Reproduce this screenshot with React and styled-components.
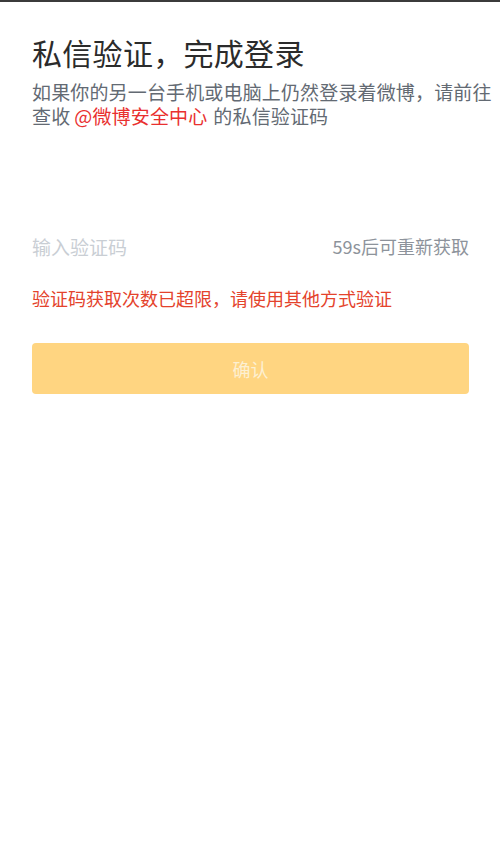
import React from "react";
import styled, { createGlobalStyle } from "styled-components";

const GlobalStyle = createGlobalStyle`
  html, body {
    margin: 0;
    padding: 0;
    background: #ffffff;
  }
  body {
    font-family: "Noto Sans CJK SC", "Noto Sans", sans-serif;
  }
`;

const App = () => {
  return (
    <>
      <GlobalStyle />
      <Page>
        <TopLine />
        <Content>
          <Title>私信验证，完成登录</Title>
          <Desc>
            <DescLine>如果你的另一台手机或电脑上仍然登录着微博，请前往</DescLine>
            <DescLine>
              <span>查收</span>
              <Highlight>@微博安全中心</Highlight>
              <span>的私信验证码</span>
            </DescLine>
          </Desc>
          <InputRow>
            <CodeInput placeholder="输入验证码" />
            <Countdown>59s后可重新获取</Countdown>
          </InputRow>
          <ErrorText>验证码获取次数已超限，请使用其他方式验证</ErrorText>
          <ConfirmButton disabled>确认</ConfirmButton>
        </Content>
      </Page>
    </>
  );
};

const Page = styled.div`
  width: 500px;
  min-height: 844px;
  background: #ffffff;
`;

const TopLine = styled.div`
  height: 2px;
  background: #3b3b3b;
`;

const Content = styled.div`
  display: flex;
  flex-direction: column;
  padding: 0 31px 0 32px;
`;

const Title = styled.h1`
  margin: 30px 0 0;
  font-size: 30px;
  line-height: 40px;
  font-weight: 400;
  color: #2b2b2b;
  letter-spacing: 0.3px;
`;

const Desc = styled.div`
  margin: 8px -30px 0 0;
  font-size: 19px;
  letter-spacing: 0.15px;
  color: #636a73;
`;

const DescLine = styled.div`
  display: flex;
  align-items: center;
  height: 23.5px;
  white-space: nowrap;
`;

const Highlight = styled.span`
  margin: 0 6px 0 4px;
  color: #e9302f;
`;

const InputRow = styled.div`
  display: flex;
  align-items: center;
  justify-content: space-between;
  margin-top: 104px;
  height: 30px;
`;

const CodeInput = styled.input`
  flex: 1;
  min-width: 0;
  border: none;
  outline: none;
  padding: 0;
  background: transparent;
  font-family: inherit;
  font-size: 19px;
  color: #333;

  &::placeholder {
    color: #c9ced4;
  }
`;

const Countdown = styled.span`
  font-size: 18px;
  color: #8d939b;
  white-space: nowrap;
`;

const ErrorText = styled.p`
  margin: 25px 0 0;
  font-size: 18px;
  line-height: 24px;
  color: #e4432c;
`;

const ConfirmButton = styled.button`
  margin-top: 33px;
  height: 51px;
  width: 100%;
  border: none;
  border-radius: 4px;
  background: #ffd581;
  color: #fdf0d2;
  font-family: inherit;
  font-size: 18px;
`;

export default App;
